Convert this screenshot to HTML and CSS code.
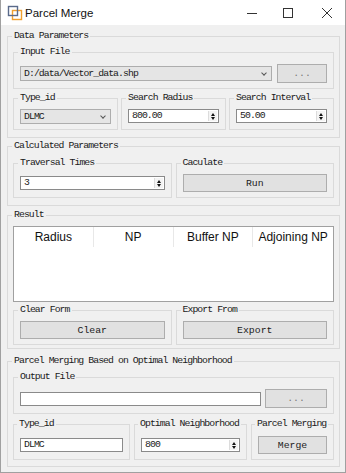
FILE: index.html
```html
<!DOCTYPE html>
<html lang="en">
<head>
    <meta charset="UTF-8">
    <meta name="viewport" content="width=device-width, initial-scale=1.0">
    <title>Parcel Merge</title>
    <link rel="stylesheet" href="styles.css">
</head>
<body>
    <div class="window">
        <div class="titlebar">
            <svg class="app-icon" width="16" height="16" viewBox="0 0 16 16">
                <rect x="5.5" y="5.5" width="9" height="9" fill="none" stroke="#f0a030" stroke-width="1.4"/>
                <rect x="1.5" y="1.5" width="9" height="9" fill="none" stroke="#5a6a8a" stroke-width="1.4"/>
            </svg>
            <span class="title">Parcel Merge</span>
            <div class="controls">
                <svg width="12" height="12" viewBox="0 0 12 12"><line x1="1" y1="6.5" x2="11" y2="6.5" stroke="#333" stroke-width="1"/></svg>
                <svg width="12" height="12" viewBox="0 0 12 12"><rect x="1.5" y="1.5" width="9" height="9" fill="none" stroke="#333" stroke-width="1"/></svg>
                <svg class="close" width="12" height="12" viewBox="0 0 12 12"><path d="M1 1 L11 11 M11 1 L1 11" stroke="#333" stroke-width="1"/></svg>
            </div>
        </div>
        <div class="content">
            <fieldset class="group outer data">
                <legend>Data Parameters</legend>
                <fieldset class="group">
                    <legend>Input File</legend>
                    <div class="file-row">
                        <div class="combo">D:/data/Vector_data.shp<span class="arrow"></span></div>
                        <button class="btn">...</button>
                    </div>
                </fieldset>
                <div class="row three">
                    <fieldset class="group">
                        <legend>Type_id</legend>
                        <div class="combo">DLMC<span class="arrow"></span></div>
                    </fieldset>
                    <fieldset class="group">
                        <legend>Search Radius</legend>
                        <div class="spin">800.00<span class="spin-btns"><i class="up"></i><i class="down"></i></span></div>
                    </fieldset>
                    <fieldset class="group">
                        <legend>Search Interval</legend>
                        <div class="spin">50.00<span class="spin-btns"><i class="up"></i><i class="down"></i></span></div>
                    </fieldset>
                </div>
            </fieldset>

            <fieldset class="group outer calc">
                <legend>Calculated Parameters</legend>
                <div class="row two">
                    <fieldset class="group tall">
                        <legend>Traversal Times</legend>
                        <div class="spin">3<span class="spin-btns"><i class="up"></i><i class="down"></i></span></div>
                    </fieldset>
                    <fieldset class="group tall">
                        <legend>Caculate</legend>
                        <button class="btn">Run</button>
                    </fieldset>
                </div>
            </fieldset>

            <fieldset class="group outer result">
                <legend>Result</legend>
                <div class="table">
                    <div class="thead">
                        <div class="th">Radius</div>
                        <div class="th">NP</div>
                        <div class="th">Buffer NP</div>
                        <div class="th">Adjoining NP</div>
                    </div>
                </div>
                <div class="row two">
                    <fieldset class="group tall">
                        <legend>Clear Form</legend>
                        <button class="btn">Clear</button>
                    </fieldset>
                    <fieldset class="group tall">
                        <legend>Export From</legend>
                        <button class="btn">Export</button>
                    </fieldset>
                </div>
            </fieldset>

            <fieldset class="group outer merge">
                <legend>Parcel Merging Based on Optimal Neighborhood</legend>
                <fieldset class="group">
                    <legend>Output File</legend>
                    <div class="file-row">
                        <div class="field"></div>
                        <button class="btn wide">...</button>
                    </div>
                </fieldset>
                <div class="row merge-cols">
                    <fieldset class="group tall">
                        <legend>Type_id</legend>
                        <div class="field">DLMC</div>
                    </fieldset>
                    <fieldset class="group tall">
                        <legend>Optimal Neighborhood</legend>
                        <div class="spin">800<span class="spin-btns"><i class="up"></i><i class="down"></i></span></div>
                    </fieldset>
                    <fieldset class="group tall">
                        <legend>Parcel Merging</legend>
                        <button class="btn">Merge</button>
                    </fieldset>
                </div>
            </fieldset>
        </div>
    </div>
</body>
</html>
```

FILE: styles.css
```css
:root {
    --bg: #f0f0f0;
    --frame: #dadada;
    --text: #1a1a1a;
    --input-border: #8a8a8a;
    --btn-bg: #e1e1e1;
    --btn-border: #adadad;
}

body {
    margin: 0;
    background: #fff;
    font-family: "Liberation Mono", "DejaVu Sans Mono", monospace;
    font-size: 9.8px;
    letter-spacing: -0.93px;
    color: var(--text);
}

.window {
    width: 346px;
    height: 473px;
    box-sizing: border-box;
    border: 1px solid #a0a0a0;
    border-top: none;
    display: flex;
    flex-direction: column;
}

.titlebar {
    height: 25px;
    flex: none;
    background: #fff;
    display: flex;
    align-items: center;
}

.app-icon {
    margin-left: 6px;
}

.title {
    margin-left: 2px;
    font-family: "Liberation Sans", Arial, sans-serif;
    font-size: 11.5px;
    letter-spacing: 0;
    color: #111;
}

.controls {
    margin-left: auto;
    display: flex;
    gap: 24px;
    margin-right: 12px;
}

.controls .close {
    margin-left: 3px;
}

.content {
    flex: 1;
    background: var(--bg);
    padding: 5px 5px 0 6px;
}

/* group boxes */
.group {
    margin: 0;
    border: 1px solid var(--frame);
    padding: 6px 6px 5px;
    min-width: 0;
}

.group legend {
    padding: 0 2px;
    margin-left: -2px;
    line-height: 12px;
    height: 12px;
    white-space: nowrap;
}

.outer {
    width: 333px;
    box-sizing: border-box;
    padding: 4px 5px 7px;
}

.outer > legend {
    margin-left: -1px;
}

.data { margin-bottom: 2px; }
.calc { margin-bottom: 3px; padding-top: 5px; }
.result { margin-bottom: 6px; padding-top: 5px; padding-bottom: 3px; }
.merge { padding-bottom: 6px; }

.group.tall {
    padding-top: 5px;
}

.row {
    display: grid;
    margin-top: 3px;
}

.three {
    grid-template-columns: repeat(3, 1fr);
    gap: 3px;
}

.three .group {
    padding-top: 5px;
}

.two {
    grid-template-columns: 1fr 1fr;
    gap: 4px;
    margin-top: 0;
}

.result .two {
    margin-top: 2px;
}

.merge-cols {
    grid-template-columns: 117px 113px 1fr;
    gap: 4px;
    margin-top: 4px;
}

.merge .group.tall {
    padding-top: 6px;
}

.merge-cols .group legend {
    margin-left: -3px;
}

.file-row {
    display: flex;
    align-items: center;
    gap: 5px;
    height: 19px;
}

.merge .file-row {
    gap: 4px;
}

/* controls */
.combo,
.field,
.spin {
    box-sizing: border-box;
    height: 14px;
    line-height: 12px;
    padding: 0 3px;
    position: relative;
    flex: 1;
    min-width: 0;
    white-space: nowrap;
}

.combo {
    background: #e5e5e5;
    border: 1px solid var(--btn-border);
    height: 15px;
    line-height: 13px;
}

.arrow {
    position: absolute;
    right: 5px;
    top: 4px;
    width: 3px;
    height: 3px;
    border-right: 1px solid #555;
    border-bottom: 1px solid #555;
    transform: rotate(45deg);
}

.field,
.spin {
    background: #fff;
    border: 1px solid var(--input-border);
}

.spin-btns {
    position: absolute;
    right: 1px;
    top: 1px;
    bottom: 1px;
    width: 8px;
    background: #f4f4f4;
    border-left: 1px solid #dcdcdc;
    display: flex;
    flex-direction: column;
    align-items: center;
    justify-content: center;
    gap: 1px;
}

.spin-btns i {
    display: block;
    width: 0;
    height: 0;
    border-left: 2.5px solid transparent;
    border-right: 2.5px solid transparent;
}

.spin-btns .up { border-bottom: 3px solid #111; }
.spin-btns .down { border-top: 3px solid #111; }

.btn {
    display: block;
    box-sizing: border-box;
    width: 100%;
    height: 18px;
    margin: 0;
    padding: 0;
    background: var(--btn-bg);
    border: 1px solid var(--btn-border);
    font: inherit;
    color: var(--text);
}

.file-row .btn {
    width: 50px;
    height: 19px;
    flex: none;
    color: #777;
}

.file-row .btn.wide {
    width: 62px;
}

.tall .spin {
    margin: 2px 0;
}

.merge-cols .field,
.merge-cols .spin {
    margin: 2px 0;
}

/* result table */
.table {
    height: 76px;
    box-sizing: border-box;
    background: #fff;
    border: 1px solid #a0a0a0;
}

.thead {
    display: grid;
    grid-template-columns: repeat(4, 1fr);
    height: 20px;
}

.th {
    font-family: "Liberation Sans", Arial, sans-serif;
    font-size: 12px;
    letter-spacing: 0;
    color: #111;
    text-align: center;
    line-height: 20px;
    border-right: 1px solid #e8e8e8;
}

.th:last-child {
    border-right: none;
}
```
